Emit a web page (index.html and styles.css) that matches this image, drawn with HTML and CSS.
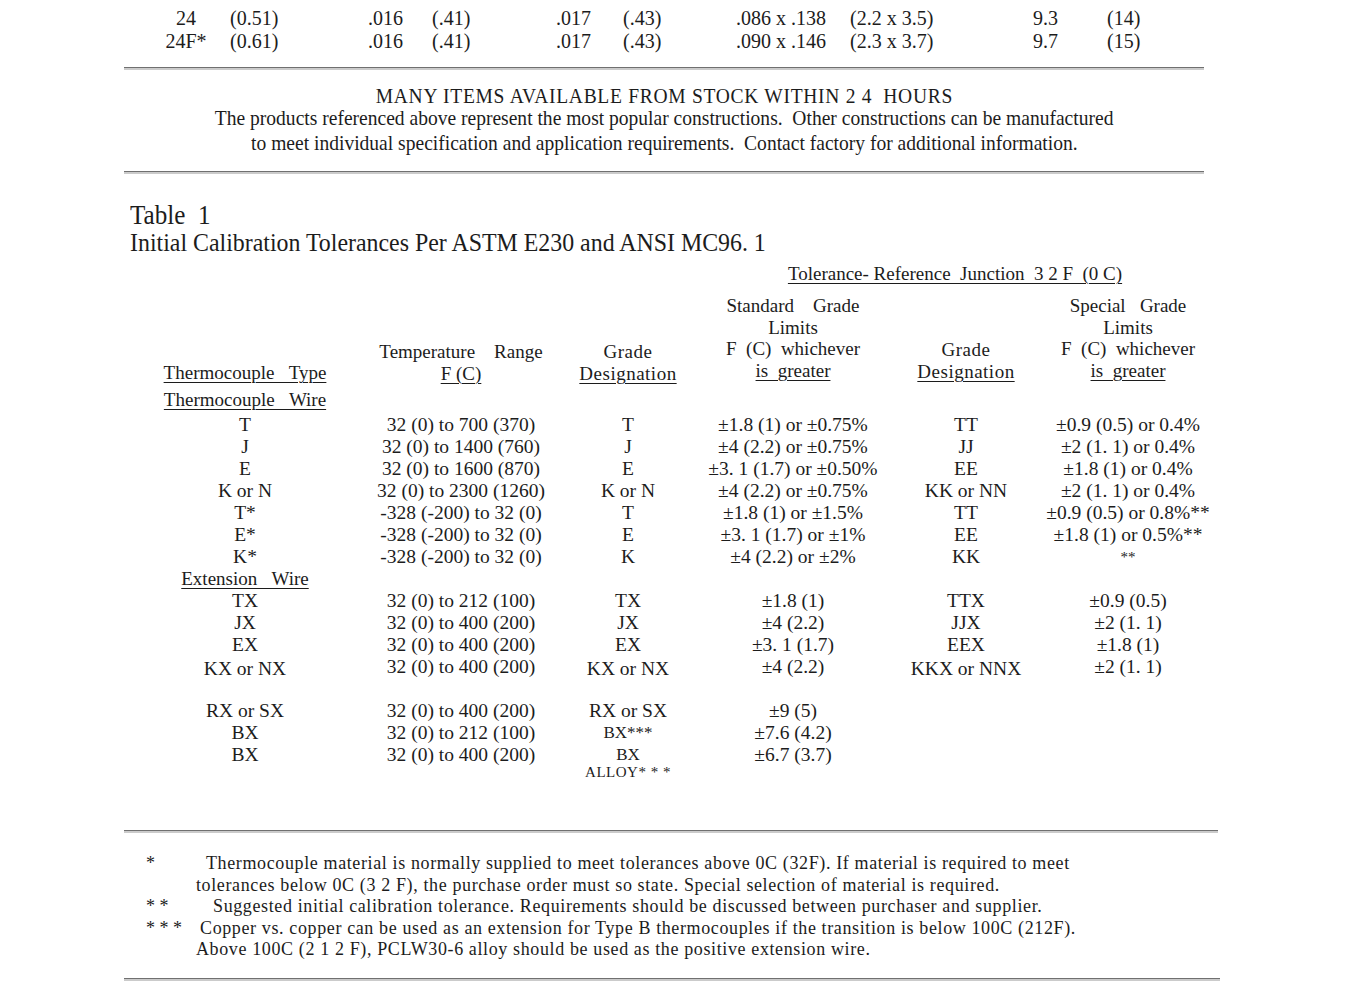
FILE: index.html
```html
<!DOCTYPE html>
<html>
<head>
<meta charset="utf-8">
<link rel="stylesheet" href="styles.css">
</head>
<body>
<div class="page">
  <div class="sizes">
    <div class="c">24</div><div class="l">(0.51)</div><div class="l">.016</div><div class="l">(.41)</div><div class="l">.017</div><div class="l">(.43)</div><div class="l">.086 x .138</div><div class="l">(2.2 x 3.5)</div><div class="l">9.3</div><div class="l">(14)</div>
    <div class="c">24F*</div><div class="l">(0.61)</div><div class="l">.016</div><div class="l">(.41)</div><div class="l">.017</div><div class="l">(.43)</div><div class="l">.090 x .146</div><div class="l">(2.3 x 3.7)</div><div class="l">9.7</div><div class="l">(15)</div>
  </div>
  <div class="rule r1"></div>
  <div class="notice">
    <div class="n1"><span class="cond wide">MANY ITEMS AVAILABLE FROM STOCK WITHIN 2 4 &nbsp;HOURS</span></div>
    <div class="n2"><span class="cond">The products referenced above represent the most popular constructions. &nbsp;Other constructions can be manufactured</span></div>
    <div class="n3"><span class="cond">to meet individual specification and application requirements. &nbsp;Contact factory for additional information.</span></div>
  </div>
  <div class="rule r2"></div>

  <div class="title">
    <div class="t1"><span class="tcond">Table &nbsp;1</span></div>
    <div class="t2"><span class="tcond">Initial Calibration Tolerances Per ASTM E230 and ANSI MC96. 1</span></div>
  </div>

  <div class="table">
    <div class="span3 ref"><span class="u">Tolerance- Reference &nbsp;Junction &nbsp;3 2 F &nbsp;(0 C)</span></div>

    <div class="hd h1"><span class="u">Thermocouple &nbsp;&nbsp;Type</span></div>
    <div class="hd h2">Temperature &nbsp;&nbsp;&nbsp;Range<br><span class="u">F (C)</span></div>
    <div class="hd h3">Grade<br><span class="u">Designation</span></div>
    <div class="hd h4">Standard &nbsp;&nbsp;&nbsp;Grade<br>Limits<br>F &nbsp;(C) &nbsp;whichever<br><span class="u">is &nbsp;greater</span></div>
    <div class="hd h5">Grade<br><span class="u">Designation</span></div>
    <div class="hd h6">Special &nbsp;&nbsp;Grade<br>Limits<br>F &nbsp;(C) &nbsp;whichever<br><span class="u">is &nbsp;greater</span></div>

    <div class="sub first"><span class="u">Thermocouple &nbsp;&nbsp;Wire</span></div>
    <div class="sub rest"></div>

    <div>T</div><div>32 (0) to 700 (370)</div><div>T</div><div>±1.8 (1) or ±0.75%</div><div>TT</div><div>±0.9 (0.5) or 0.4%</div>
    <div>J</div><div>32 (0) to 1400 (760)</div><div>J</div><div>±4 (2.2) or ±0.75%</div><div>JJ</div><div>±2 (1. 1) or 0.4%</div>
    <div>E</div><div>32 (0) to 1600 (870)</div><div>E</div><div>±3. 1 (1.7) or ±0.50%</div><div>EE</div><div>±1.8 (1) or 0.4%</div>
    <div>K or N</div><div>32 (0) to 2300 (1260)</div><div>K or N</div><div>±4 (2.2) or ±0.75%</div><div>KK or NN</div><div>±2 (1. 1) or 0.4%</div>
    <div>T*</div><div>-328 (-200) to 32 (0)</div><div>T</div><div>±1.8 (1) or ±1.5%</div><div>TT</div><div>±0.9 (0.5) or 0.8%**</div>
    <div>E*</div><div>-328 (-200) to 32 (0)</div><div>E</div><div>±3. 1 (1.7) or ±1%</div><div>EE</div><div>±1.8 (1) or 0.5%**</div>
    <div>K*</div><div>-328 (-200) to 32 (0)</div><div>K</div><div>±4 (2.2) or ±2%</div><div>KK</div><div class="stars">**</div>
    <div class="ext"><span class="u">Extension &nbsp;&nbsp;Wire</span></div><div></div><div></div><div></div><div></div><div></div>
    <div>TX</div><div>32 (0) to 212 (100)</div><div>TX</div><div>±1.8 (1)</div><div>TTX</div><div>±0.9 (0.5)</div>
    <div>JX</div><div>32 (0) to 400 (200)</div><div>JX</div><div>±4 (2.2)</div><div>JJX</div><div>±2 (1. 1)</div>
    <div>EX</div><div>32 (0) to 400 (200)</div><div>EX</div><div>±3. 1 (1.7)</div><div>EEX</div><div>±1.8 (1)</div>
    <div class="low">KX or NX</div><div>32 (0) to 400 (200)</div><div class="low">KX or NX</div><div>±4 (2.2)</div><div class="low">KKX or NNX</div><div>±2 (1. 1)</div>
    <div class="blank"></div><div></div><div></div><div></div><div></div><div></div>
    <div>RX or SX</div><div>32 (0) to 400 (200)</div><div>RX or SX</div><div>±9 (5)</div><div></div><div></div>
    <div>BX</div><div>32 (0) to 212 (100)</div><div class="small">BX***</div><div>±7.6 (4.2)</div><div></div><div></div>
    <div>BX</div><div>32 (0) to 400 (200)</div><div class="small">BX<br><span class="alloy">ALLOY* * *</span></div><div>±6.7 (3.7)</div><div></div><div></div>
  </div>

  <div class="rule r3"></div>
  <div class="notes">
    <div class="note"><span class="mk">*</span><p class="i1">Thermocouple material is normally supplied to meet tolerances above 0C (32F). If material is required to meet<br>tolerances below 0C (3 2 F), the purchase order must so state. Special selection of material is required.</p></div>
    <div class="note"><span class="mk">* *</span><p class="i2">Suggested initial calibration tolerance. Requirements should be discussed between purchaser and supplier.</p></div>
    <div class="note"><span class="mk">* * *</span><p class="i3">Copper vs. copper can be used as an extension for Type B thermocouples if the transition is below 100C (212F).<br>Above 100C (2 1 2 F), PCLW30-6 alloy should be used as the positive extension wire.</p></div>
  </div>
  <div class="rule r4"></div>
</div>
</body>
</html>
```
FILE: styles.css
```css
html, body {
  margin: 0;
  padding: 0;
  background: #ffffff;
  overflow: hidden;
}
body {
  font-family: "Liberation Serif", "Times New Roman", serif;
  color: #1c1c1c;
  width: 1360px;
  height: 985px;
}
.page {
  width: 1360px;
}

/* top size rows */
.sizes {
  display: grid;
  grid-template-columns: 80px 142px 64px 124px 67px 113px 114px 183px 74px 97px;
  grid-auto-rows: 23px;
  align-content: start;
  margin-left: 146px;
  padding-top: 7px;
  font-size: 20px;
  line-height: 23px;
  height: 60px;
}
.sizes .c { text-align: center; }
.sizes .l { text-align: left; }
.sizes .l:nth-child(10n+2) { padding-left: 4px; }

.rule {
  height: 2px;
  border-top: 1px solid #707070;
  background: #cbcbcb;
  margin-left: 124px;
}
.r1 { width: 1080px; }
.r2 { width: 1080px; }
.r3 { width: 1094px; }
.r4 { width: 1096px; }

.notice {
  width: 1080px;
  margin-left: 124px;
  text-align: center;
  font-size: 21px;
  height: 101px;
  padding-top: 15px;
  box-sizing: border-box;
}
.cond {
  display: inline-block;
  transform: scaleX(0.93);
  white-space: nowrap;
}
.cond.wide { letter-spacing: 0.75px; }
.n1 { line-height: 22px; }
.n2 { line-height: 22px; }
.n3 { line-height: 24px; margin-top: 2px; }

.title {
  margin-left: 130px;
  margin-top: 27px;
}
.tcond {
  display: inline-block;
  transform-origin: left center;
  white-space: nowrap;
}
.t1 { font-size: 27px; line-height: 28px; }
.t1 .tcond { transform: scaleX(0.93); }
.t2 { font-size: 25px; line-height: 28px; }
.t2 .tcond { transform: scaleX(0.955); }

.table {
  display: grid;
  grid-template-columns: 230px 202px 132px 198px 148px 176px;
  margin-left: 130px;
  margin-top: 6px;
  font-size: 19.5px;
  line-height: 22px;
  text-align: center;
  white-space: nowrap;
}
.u {
  text-decoration: underline;
  text-underline-offset: 3px;
  text-decoration-thickness: 1px;
}
.span3 {
  grid-column: 4 / 7;
}
.ref {
  font-size: 19px;
  line-height: 22px;
  margin-bottom: 10px;
}
.hd {
  align-self: end;
  font-size: 19px;
  line-height: 21.5px;
}
.h1 { line-height: 16px; }
.h2, .h3 { margin-bottom: -3px; }
.h3, .h5 { letter-spacing: 0.5px; }
.h5 { margin-bottom: -1px; }
.sub {
  padding-top: 8px;
  padding-bottom: 3px;
  font-size: 19px;
}
.sub.rest { grid-column: 2 / 7; }
.ext { font-size: 19px; }
.low { transform: translateY(2px); }
.small { font-size: 17px; }
.alloy {
  display: inline-block;
  font-size: 15px;
  line-height: 12px;
  letter-spacing: 0.5px;
  vertical-align: top;
}
.blank { height: 22px; }
.stars { font-size: 15px; }

.r3 { margin-top: 42px; }

.notes {
  width: 1096px;
  margin-left: 124px;
  padding-top: 20px;
  height: 145px;
  box-sizing: border-box;
  font-size: 18px;
  line-height: 21.5px;
  letter-spacing: 0.62px;
}
.note {
  display: flex;
}
.mk {
  width: 72px;
  flex: none;
  padding-left: 22px;
  box-sizing: border-box;
  letter-spacing: 0;
}
.note p {
  margin: 0;
  white-space: nowrap;
}
.i1 { text-indent: 10px; }
.i2 { text-indent: 17px; }
.i3 { text-indent: 4px; }
```
